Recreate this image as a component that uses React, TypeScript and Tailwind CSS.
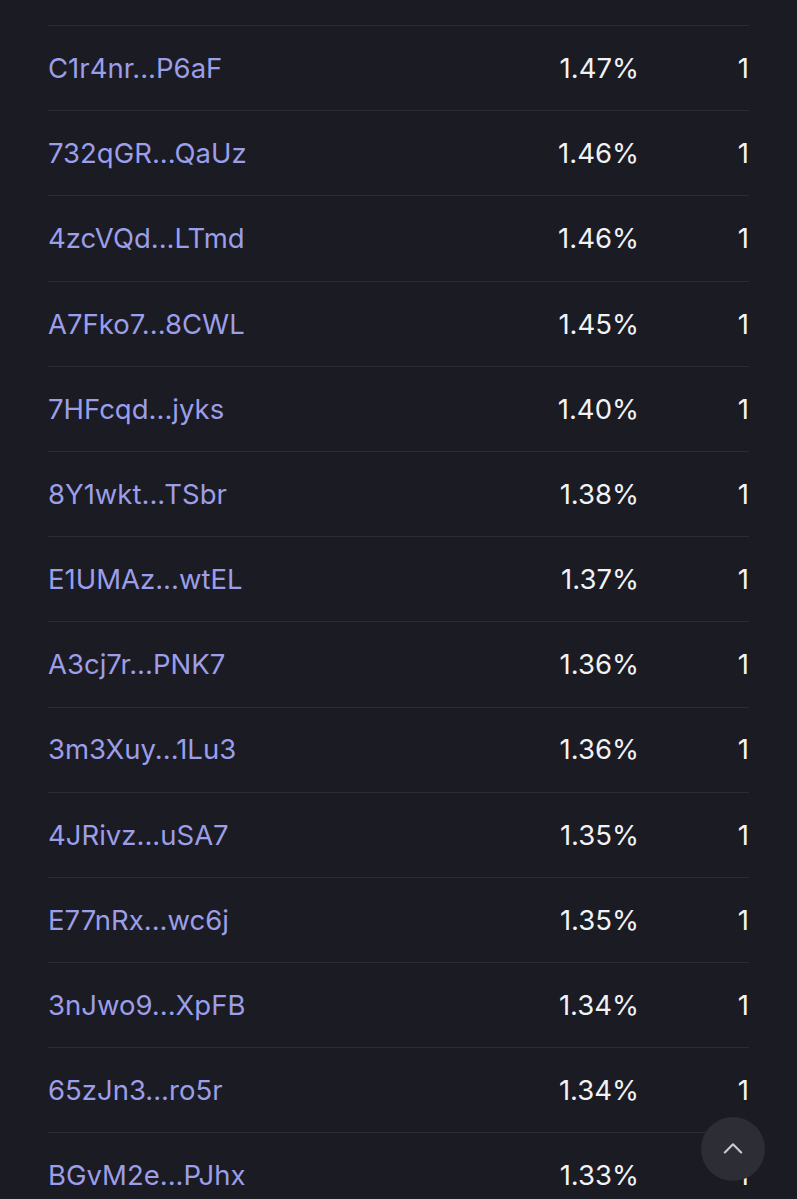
import React from "react";

const rows: [string, string, string][] = [
  ["C1r4nr...P6aF", "1.47%", "1"],
  ["732qGR...QaUz", "1.46%", "1"],
  ["4zcVQd...LTmd", "1.46%", "1"],
  ["A7Fko7...8CWL", "1.45%", "1"],
  ["7HFcqd...jyks", "1.40%", "1"],
  ["8Y1wkt...TSbr", "1.38%", "1"],
  ["E1UMAz...wtEL", "1.37%", "1"],
  ["A3cj7r...PNK7", "1.36%", "1"],
  ["3m3Xuy...1Lu3", "1.36%", "1"],
  ["4JRivz...uSA7", "1.35%", "1"],
  ["E77nRx...wc6j", "1.35%", "1"],
  ["3nJwo9...XpFB", "1.34%", "1"],
  ["65zJn3...ro5r", "1.34%", "1"],
  ["BGvM2e...PJhx", "1.33%", "1"],
];

export default function App() {
  return (
    <div
      className="relative w-[797px] h-[1199px] overflow-hidden bg-[#1a1b23]"
      style={{ fontFamily: "Inter, 'Noto Sans', sans-serif" }}
    >
      <div className="px-[48px]">
        <div className="h-[26px] border-b border-[#2b2c35]" />
        {rows.map(([addr, pct, n], i) => (
          <div
            key={i}
            className="h-[85.2px] border-b border-[#2b2c35] flex items-center pt-[1px] text-[27.5px]"
          >
            <span className="flex-1 text-[#9c9ee8]">{addr}</span>
            <span className="w-[120px] text-right text-[#f2f2f4]">{pct}</span>
            <span className="w-[110px] text-right text-[#f2f2f4]">{n}</span>
          </div>
        ))}
      </div>
      <button className="absolute left-[701px] top-[1117px] w-[64px] h-[64px] rounded-full bg-[#2c2d35] flex items-center justify-center">
        <svg width="28" height="28" viewBox="0 0 24 24" fill="none" stroke="#c9cad0" strokeWidth="1.8" strokeLinecap="round" strokeLinejoin="round">
          <path d="M5 15l7-7 7 7" />
        </svg>
      </button>
    </div>
  );
}
